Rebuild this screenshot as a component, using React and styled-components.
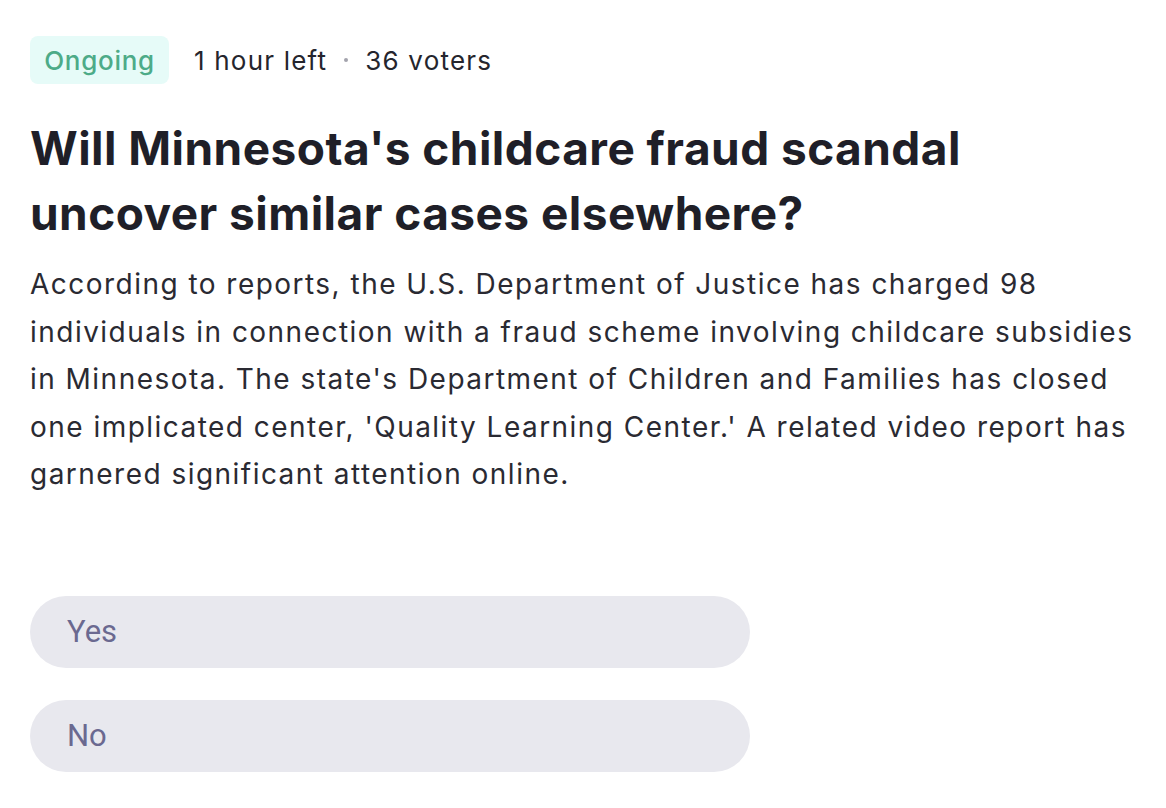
import React from "react";
import styled, { createGlobalStyle } from "styled-components";

const Global = createGlobalStyle`
  html, body { margin: 0; padding: 0; background: #ffffff; }
  body { font-family: Inter, "Liberation Sans", sans-serif; -webkit-font-smoothing: antialiased; }
`;

const Page = styled.div`
  padding: 36px 16px 0 30px;
  display: flex;
  flex-direction: column;
`;

const Meta = styled.div`
  display: flex;
  align-items: center;
  gap: 25px;
  color: #25252d;
`;

const Badge = styled.span`
  display: inline-flex;
  align-items: center;
  justify-content: center;
  width: 139px;
  height: 48px;
  box-sizing: border-box;
  border-radius: 8px;
  background: #e6fbf8;
  color: #4dab88;
  font-size: 26px;
  font-weight: 500;
  letter-spacing: 0.7px;
`;

const Info = styled.span`
  display: flex;
  align-items: center;
  gap: 17px;
  font-size: 26px;
  letter-spacing: 1.2px;
`;

const Dot = styled.span`
  width: 4px;
  height: 4px;
  border-radius: 50%;
  background: #a3a3ad;
`;

const Title = styled.h1`
  margin: 32px 0 0;
  font-size: 46px;
  line-height: 65px;
  font-weight: 700;
  color: #1f1f28;
  letter-spacing: 0.45px;
`;

const Body = styled.p`
  margin: 15px 0 0;
  font-size: 28px;
  line-height: 47.5px;
  color: #2a2a32;
  letter-spacing: 1.47px;
`;

const Options = styled.div`
  margin-top: 97px;
  display: flex;
  flex-direction: column;
  gap: 32px;
  width: 720px;
`;

const Option = styled.button`
  height: 72px;
  border: none;
  border-radius: 36px;
  background: #e8e8ee;
  color: #6b6990;
  font-family: Roboto, "Liberation Sans", sans-serif;
  font-size: 31px;
  font-weight: 400;
  text-align: left;
  padding: 0 37px;
  cursor: pointer;
`;

export default function App() {
  return (
    <>
      <Global />
      <Page>
        <Meta>
          <Badge>Ongoing</Badge>
          <Info>
            <span>1 hour left</span>
            <Dot />
            <span>36 voters</span>
          </Info>
        </Meta>
        <Title>
          Will Minnesota's childcare fraud scandal
          <br />
          uncover similar cases elsewhere?
        </Title>
        <Body>
          According to reports, the U.S. Department of Justice has charged 98 individuals in connection with a fraud scheme involving childcare subsidies in Minnesota. The state's Department of Children and Families has closed one implicated center, 'Quality Learning Center.' A related video report has garnered significant attention online.
        </Body>
        <Options>
          <Option>Yes</Option>
          <Option>No</Option>
        </Options>
      </Page>
    </>
  );
}
